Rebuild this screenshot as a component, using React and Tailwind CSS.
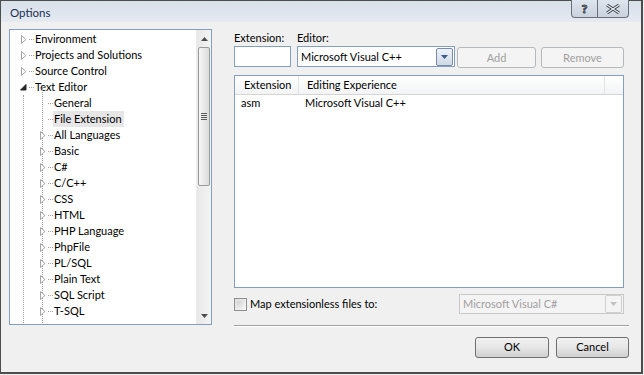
import React from "react";

const font = { fontFamily: 'Lato, "Noto Sans", sans-serif' };

function Closed() {
  return (
    <svg width="6" height="9" viewBox="0 0 6 9" className="block">
      <path d="M0.5 0.5 L5 4.5 L0.5 8.5 Z" fill="#fff" stroke="#a6a6a6" />
    </svg>
  );
}
function Open() {
  return (
    <svg width="7" height="7" viewBox="0 0 7 7" className="block">
      <path d="M6 0.5 L6 6 L0.5 6 Z" fill="#262626" stroke="#262626" />
    </svg>
  );
}

const top = ["Environment", "Projects and Solutions", "Source Control"];
const langs = ["All Languages", "Basic", "C#", "C/C++", "CSS", "HTML", "PHP Language", "PhpFile", "PL/SQL", "Plain Text", "SQL Script", "T-SQL"];

function Row({ kind, label, selected }) {
  return (
    <div className="h-4 flex items-center relative">
      <div className="w-[18px] flex items-center justify-end pr-[1px] shrink-0 h-4">
        {kind === "closed" && <Closed />}
        {kind === "open" && <Open />}
      </div>
      <div className="ml-[1px] w-[5px] border-t border-dotted border-[#a0a0a0] shrink-0" />
      <span className={`pl-[1px] pr-[2px] leading-4 ${selected ? "bg-[#e6e6e6]" : ""}`}>{label}</span>
    </div>
  );
}

function Tree() {
  return (
    <div className="w-[203px] h-[296px] border border-[#82a0be] bg-white flex overflow-hidden">
      <div className="flex-1 pt-[1px] relative text-black">
        <div>
          {top.map((t) => (
            <Row key={t} kind="closed" label={t} />
          ))}
          <Row kind="open" label="Text Editor" />
          <div className="relative">
            <div className="absolute left-[13px] top-0 bottom-[-40px] border-l border-dotted border-[#a0a0a0]" />
            <div className="absolute left-[32px] top-[-8px] bottom-[-40px] border-l border-dotted border-[#a0a0a0]" />
            <div className="pl-[19px]">
              <Row kind="none" label="General" />
              <Row kind="none" label="File Extension" selected />
              {langs.map((l) => (
                <Row key={l} kind="closed" label={l} />
              ))}
            </div>
          </div>
        </div>
      </div>
      <div className="w-[15px] flex flex-col bg-gradient-to-r from-[#e8e8e8] to-[#f4f4f4] border-l border-[#ececec]">
        <div className="h-[17px] flex items-center justify-center">
          <svg width="7" height="4" viewBox="0 0 7 4"><path d="M3.5 0 L7 4 L0 4 Z" fill="#4d4d4d" /></svg>
        </div>
        <div className="h-[139px] mx-[1px] rounded-[2px] border border-[#9a9a9a] bg-gradient-to-r from-[#f6f6f6] to-[#dcdcdc] flex items-center justify-center">
          <div className="flex flex-col gap-[1px]">
            <div className="w-[6px] h-px bg-[#5a5a5a]" />
            <div className="w-[6px] h-px bg-[#5a5a5a]" />
            <div className="w-[6px] h-px bg-[#5a5a5a]" />
            <div className="w-[6px] h-px bg-[#5a5a5a]" />
          </div>
        </div>
        <div className="flex-1" />
        <div className="h-[17px] flex items-center justify-center">
          <svg width="7" height="4" viewBox="0 0 7 4"><path d="M0 0 L7 0 L3.5 4 Z" fill="#4d4d4d" /></svg>
        </div>
      </div>
    </div>
  );
}

function DropBtn({ disabled }) {
  return (
    <div
      className={`w-[17px] h-[18px] rounded-[2px] border flex items-center justify-center ${
        disabled ? "border-[#d0d0d0] bg-[#f4f4f4]" : "border-[#7a8ca6] bg-gradient-to-b from-[#eef3fa] to-[#cfd9e6]"
      }`}
    >
      <svg width="7" height="4" viewBox="0 0 7 4">
        <path d="M0 0 L7 0 L3.5 4 Z" fill={disabled ? "#c0c0c0" : "#3c5a8a"} />
      </svg>
    </div>
  );
}

function Btn({ children, w, disabled }) {
  return (
    <div
      className={`${w} h-[21px] rounded-[3px] border flex items-center justify-center ${
        disabled
          ? "border-[#b5b9bb] bg-[#f4f4f4] text-[#a0a0a0]"
          : "border-[#707070] bg-gradient-to-b from-[#f2f2f2] via-[#e6e6e6] to-[#d0d0d0] text-black"
      }`}
    >
      {children}
    </div>
  );
}

export default function App() {
  return (
    <div style={font} className="w-[644px] h-[375px] bg-[#f0f0f0] text-[11px] text-black">
      <div className="w-[643px] h-[374px] border border-[#4d4d4d] border-r-2 border-b-2 flex flex-col bg-[#f0f0f0] relative">
        {/* title bar */}
        <div className="h-[21px] bg-gradient-to-b from-[#d8e0ea] to-[#e5eaf1] flex items-center pt-[3px] pl-[9px] relative">
          <span className="text-[11.5px] text-[#1a2f52]">Options</span>
          <div className="absolute right-[12px] top-[-1px] flex">
            <div className="w-[27px] h-[18px] border border-[#6a6f78] border-t-0 rounded-bl-[4px] bg-gradient-to-b from-[#dfe5ee] to-[#c9d2de] flex items-center justify-center text-[12px] text-[#e8ecf2] font-bold" style={{ WebkitTextStroke: "1px #3a3f48" }}>
              ?
            </div>
            <div className="w-[31px] h-[18px] border border-[#6a6f78] border-t-0 border-l-0 rounded-br-[4px] bg-gradient-to-b from-[#dfe5ee] to-[#c9d2de] flex items-center justify-center">
              <svg width="14" height="10" viewBox="0 0 14 10">
                <path d="M1 1 L13 9 M13 1 L1 9" stroke="#3a3f48" strokeWidth="3" />
                <path d="M1 1 L13 9 M13 1 L1 9" stroke="#eef1f5" strokeWidth="1.2" />
              </svg>
            </div>
          </div>
        </div>
        {/* body */}
        <div className="flex pt-[7px] pl-[8px]">
          <Tree />
          <div className="ml-[22px] w-[395px] flex flex-col">
            <div className="flex leading-[15px]">
              <div className="w-[57px] flex flex-col">
                <span className="mt-[1px] mb-[1px]">Extension:</span>
                <div className="h-[21px] border border-[#82a0be] bg-white" />
              </div>
              <div className="ml-[6px] flex flex-col">
                <span className="mt-[1px] mb-[1px]">Editor:</span>
                <div className="w-[158px] h-[21px] border border-[#82a0be] bg-white flex items-center justify-between pl-[3px] pr-[1px]">
                  <span>Microsoft Visual C++</span>
                  <DropBtn />
                </div>
              </div>
              <div className="ml-[2px] flex gap-[5px] mt-[18px]">
                <Btn w="w-[79px]" disabled>Add</Btn>
                <Btn w="w-[83px]" disabled>Remove</Btn>
              </div>
            </div>
            <div className="mt-[7px] w-[390px] h-[213px] border border-[#82a0be] bg-white flex flex-col">
              <div className="h-[19px] flex bg-gradient-to-b from-white to-[#f3f4f6] border-b border-[#d5d5d5]">
                <div className="w-[64px] pl-[9px] flex items-center border-r border-[#e3e3e3]">Extension</div>
                <div className="w-[306px] pl-[8px] flex items-center border-r border-[#e3e3e3]">Editing Experience</div>
              </div>
              <div className="flex h-[17px] items-center">
                <div className="w-[64px] pl-[6px]">asm</div>
                <div className="pl-[6px]">Microsoft Visual C++</div>
              </div>
            </div>
            <div className="mt-[6px] flex items-center">
              <div className="w-[13px] h-[13px] border border-[#8f8f8f] bg-gradient-to-br from-[#dcdcdc] to-[#f8f8f8] p-[2px]">
                <div className="w-full h-full bg-gradient-to-br from-[#d2d2d2] to-[#f2f2f2]" />
              </div>
              <span className="ml-[3px]">Map extensionless files to:</span>
              <div className="ml-auto mr-[5px] w-[165px] h-[20px] border border-[#c9c9c9] bg-[#f4f4f4] flex items-center justify-between pl-[3px] pr-[1px] text-[#a0a0a0]">
                <span>Microsoft Visual C#</span>
                <DropBtn disabled />
              </div>
            </div>
            <div className="mt-[11px] w-[395px] h-0 border-t border-[#a0a0a0] border-b border-b-white" />
          </div>
        </div>
        <div className="flex justify-end gap-[7px] mt-[10px] pr-[12px]">
          <Btn w="w-[74px]">OK</Btn>
          <Btn w="w-[73px]">Cancel</Btn>
        </div>
      </div>
    </div>
  );
}
